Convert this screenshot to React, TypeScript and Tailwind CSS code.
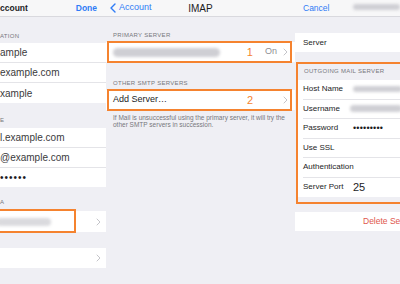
import React from 'react'

function Chevron({ className = '' }: { className?: string }) {
  return (
    <svg width="5" height="8" viewBox="0 0 5 8" className={className}>
      <polyline points="1,1 4,4 1,7" fill="none" stroke="#c4c4c9" strokeWidth="1" strokeLinecap="round" strokeLinejoin="round" />
    </svg>
  )
}

function Blur({ className = '' }: { className?: string }) {
  return <span className={`block rounded-full bg-[#cfcfd4] blur-[1.5px] ${className}`} />
}

const label = 'text-[6px] uppercase tracking-[0.3px] text-[#77777c] leading-[7px]'
const orange = 'border-2 border-[#f5832f]'

function LeftRow({ text, last = false }: { text: string; last?: boolean }) {
  return (
    <div className="h-[20px] bg-white flex items-center">
      <div className={`flex-1 h-full flex items-center ${last ? '' : 'border-b border-[#e4e4e8]'}`}>
        <span className="text-[10px] text-[#3a3a3c] whitespace-nowrap">{text}</span>
      </div>
    </div>
  )
}

function LeftPanel() {
  return (
    <div className="w-[106px] shrink-0 overflow-hidden">
      <div className="h-[17px] bg-[#f7f7f8] border-b border-[#d9d9de] flex items-center justify-between pr-[9px]">
        <span className="text-[8.5px] font-bold text-[#1c1c1e]">ccount</span>
        <span className="text-[8.5px] font-semibold text-[#2f7cf6]">Done</span>
      </div>
      <div className="h-[26px] flex items-end pb-[3px]">
        <span className={label}>ATION</span>
      </div>
      <LeftRow text="ample" />
      <LeftRow text="example.com" />
      <LeftRow text="xample" last />
      <div className="h-[25px] flex items-end pb-[4px]">
        <span className={label}>E</span>
      </div>
      <LeftRow text="l.example.com" />
      <LeftRow text="@example.com" />
      <div className="h-[19px] bg-white flex items-center">
        <span className="text-[10px] tracking-[1px] text-[#1c1c1e]">••••••</span>
      </div>
      <div className="h-[24px] flex items-end pb-[5px]">
        <span className={label}>A</span>
      </div>
      <div className="relative h-[21px] bg-white flex items-center pr-[5px]">
        <Blur className="h-[8px] w-[55px] -ml-[4px] bg-[#dadade]" />
        <Chevron className="ml-auto" />
        <span className={`absolute -left-[4px] w-[80px] -top-[2px] -bottom-[1px] ${orange}`} />
      </div>
      <div className="h-[16px]" />
      <div className="h-[20px] bg-white flex items-center justify-end pr-[5px]">
        <Chevron />
      </div>
    </div>
  )
}

function MiddlePanel() {
  return (
    <div className="w-[189px] shrink-0">
      <div className="h-[17px] bg-[#f7f7f8] border-b border-[#d9d9de] grid grid-cols-[1fr_auto_1fr] items-center">
        <div className="flex items-center pl-[4px] gap-[3px] text-[#2f7cf6]">
          <svg width="6" height="10" viewBox="0 0 6 10">
            <polyline points="5,1 1,5 5,9" fill="none" stroke="#2f7cf6" strokeWidth="1.4" strokeLinecap="round" strokeLinejoin="round" />
          </svg>
          <span className="text-[9px]">Account</span>
        </div>
        <span className="text-[10px] text-[#1c1c1e]">IMAP</span>
        <span />
      </div>
      <div className="h-[25px] flex items-end pb-[3px] pl-[7px]">
        <span className={label}>Primary Server</span>
      </div>
      <div className="relative h-[20px] bg-white flex items-center pl-[7px] pr-[7px]">
        <Blur className="h-[9px] w-[107px]" />
        <span className="ml-auto text-[11px] text-[#f5832f] mr-[12px]">1</span>
        <span className="text-[9px] text-[#8e8e93] mr-[6px]">On</span>
        <Chevron />
        <span className={`absolute left-[1px] right-[3px] -top-[1px] -bottom-[1px] ${orange}`} />
      </div>
      <div className="h-[28px] flex items-end pb-[3px] pl-[7px]">
        <span className={label}>Other SMTP Servers</span>
      </div>
      <div className="relative h-[20px] bg-white flex items-center pl-[7px] pr-[7px]">
        <span className="text-[9px] text-[#1c1c1e]">Add Server…</span>
        <span className="ml-auto text-[11px] text-[#f5832f] mr-[30px]">2</span>
        <Chevron />
        <span className={`absolute left-[1px] right-[3px] -top-[1px] -bottom-[1px] ${orange}`} />
      </div>
      <p className="pl-[7px] pr-[4px] pt-[4px] text-[6.5px] leading-[7px] text-[#77777c]">
        If Mail is unsuccessful using the primary server, it will try the other SMTP servers in succession.
      </p>
    </div>
  )
}

function RightRow({ name, children, last = false }: { name: string; children?: React.ReactNode; last?: boolean }) {
  return (
    <div className="h-[19.5px] bg-white pl-[5px]">
      <div className={`h-full flex items-center ${last ? '' : 'border-b border-[#e4e4e8]'}`}>
        <span className="w-[50px] shrink-0 text-[8px] font-medium text-[#1c1c1e] whitespace-nowrap">{name}</span>
        {children}
      </div>
    </div>
  )
}

function RightPanel() {
  return (
    <div className="w-[105px] shrink-0 overflow-hidden">
      <div className="h-[17px] bg-[#f7f7f8] border-b border-[#d9d9de] flex items-center pl-[8px]">
        <span className="text-[8.5px] text-[#2f7cf6]">Cancel</span>
        <Blur className="h-[6px] w-[50px] ml-[24px] -mt-[2px]" />
      </div>
      <div className="mt-[16px] h-[19px] bg-white flex items-center pl-[8px]">
        <span className="text-[8px] font-medium text-[#1c1c1e]">Server</span>
      </div>
      <div className={`mt-[10px] ml-[1px] -mr-[4px] ${orange} pb-[5px]`}>
        <div className="h-[16px] flex items-end pb-[5px] pl-[6px]">
          <span className={label}>Outgoing Mail Server</span>
        </div>
        <RightRow name="Host Name">
          <Blur className="h-[6px] w-[50px]" />
        </RightRow>
        <RightRow name="Username">
          <Blur className="h-[7px] w-[52px] -ml-[3px]" />
        </RightRow>
        <RightRow name="Password">
          <span className="text-[9px] text-[#1c1c1e] tracking-[0.2px] whitespace-nowrap">•••••••••</span>
        </RightRow>
        <RightRow name="Use SSL" />
        <RightRow name="Authentication" />
        <RightRow name="Server Port" last>
          <span className="text-[11px] text-[#1c1c1e]">25</span>
        </RightRow>
      </div>
      <div className="mt-[8px] h-[19px] bg-white flex items-center pl-[68px]">
        <span className="text-[8.5px] text-[#e0574d] whitespace-nowrap">Delete Se</span>
      </div>
    </div>
  )
}

export default function App() {
  return (
    <div className="w-[400px] h-[284px] overflow-hidden flex bg-[#efeff4] font-['Liberation_Sans',Arial,sans-serif]">
      <LeftPanel />
      <MiddlePanel />
      <RightPanel />
    </div>
  )
}
